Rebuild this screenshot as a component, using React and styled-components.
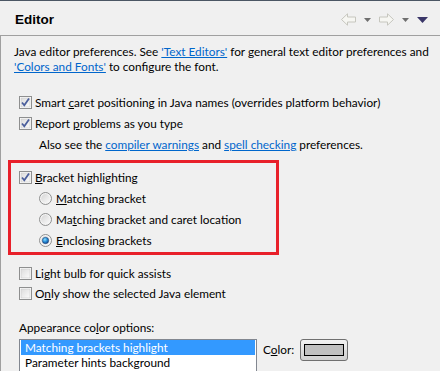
import React from 'react'
import styled, { createGlobalStyle } from 'styled-components'

const GlobalStyle = createGlobalStyle`
  html, body {
    margin: 0;
    padding: 0;
    background: #f0f0f0;
  }
  body {
    font-family: Lato, 'Open Sans', sans-serif;
    font-size: 11.8px;
    color: #000;
  }
`

const Page = styled.div`
  width: 440px;
  height: 371px;
  overflow: hidden;
  border-top: 1px solid #4b5664;
  box-sizing: border-box;
  background: #f0f0f0;
`

const Header = styled.div`
  height: 34px;
  display: flex;
  align-items: center;
  justify-content: space-between;
  padding: 0 12px 0 15px;
  border-bottom: 1px solid #a0a0a0;
`

const Title = styled.h1`
  margin: 0;
  font-family: 'Liberation Sans', Arial, sans-serif;
  font-size: 13.5px;
  font-weight: bold;
  padding-top: 2px;
`

const Nav = styled.div`
  display: flex;
  align-items: center;
  gap: 8px;
  padding-top: 3px;
`

const Body = styled.div`
  border-left: 1px solid #a0a0a0;
  padding: 8px 0 0 13px;
  height: 100%;
`

const Intro = styled.p`
  margin: 0 0 18px;
  line-height: 15px;
`

const Link = styled.a`
  color: #0066cc;
  text-decoration: underline;
  cursor: pointer;
`

const Key = styled.span`
  text-decoration: underline;
`

const Row = styled.label`
  display: flex;
  align-items: center;
  height: ${p => p.h || 21}px;
  padding-left: ${p => p.indent ?? 5}px;
  gap: ${p => p.gap || 3}px;
`

const Note = styled.div`
  height: 21px;
  display: flex;
  align-items: center;
  padding-left: 25px;
`

const Highlight = styled.div`
  margin: 5px 0 0 -6px;
  width: 257px;
  border: 3px solid #e8202a;
  padding: 4px 0 1px 8px;
  box-sizing: content-box;
`

const Group = styled.div`
  margin-top: 8px;
`

const Caption = styled.div`
  margin: 17px 0 0 5px;
  line-height: 15px;
`

const ColorRow = styled.div`
  display: flex;
  align-items: flex-start;
  margin: 4px 0 0 5px;
`

const List = styled.ul`
  list-style: none;
  margin: 0;
  padding: 0 1px 1px;
  width: 234px;
  height: 40px;
  background: #fff;
  border: 1px solid #828790;
`

const Item = styled.li`
  height: 15px;
  line-height: 15px;
  padding-left: 4px;
  background: ${p => (p.selected ? '#3399ff' : 'transparent')};
  color: ${p => (p.selected ? '#fff' : '#000')};
`

const ColorLabel = styled.span`
  margin: 3px 0 0 6px;
  line-height: 15px;
`

const ColorButton = styled.button`
  margin-left: 6px;
  width: 48px;
  height: 22px;
  border: 1px solid #707070;
  border-radius: 3px;
  background: linear-gradient(#f2f2f2, #e5e5e5 50%, #dddddd 51%, #cfcfcf);
  display: flex;
  align-items: center;
  justify-content: center;
  padding: 0;
`

const Swatch = styled.span`
  width: 38px;
  height: 10px;
  background: #c0c0c0;
  border: 1px solid #000;
`

const Check = ({ checked }) => (
  <svg width="13" height="13" viewBox="0 0 13 13">
    <defs>
      <linearGradient id="cbg" x1="0" y1="0" x2="1" y2="1">
        <stop offset="0" stopColor="#dcdcdc" />
        <stop offset="1" stopColor="#fbfbfb" />
      </linearGradient>
    </defs>
    <rect x="0.5" y="0.5" width="12" height="12" fill="#fff" stroke="#8e8f8f" />
    <rect x="2" y="2" width="9" height="9" fill="url(#cbg)" stroke="#c8c8c8" strokeWidth="0.6" />
    {checked && (
      <path d="M3 6.5 L5.3 9.3 L10 2.6" fill="none" stroke="#4b5f9c" strokeWidth="1.8" />
    )}
  </svg>
)

const Radio = ({ checked }) => (
  <svg width="13" height="13" viewBox="0 0 13 13">
    <defs>
      <linearGradient id="rbg" x1="0" y1="0" x2="1" y2="1">
        <stop offset="0" stopColor="#d6d6d6" />
        <stop offset="1" stopColor="#fafafa" />
      </linearGradient>
      <radialGradient id="rdot" cx="0.4" cy="0.35" r="0.7">
        <stop offset="0" stopColor="#8ee0ff" />
        <stop offset="0.5" stopColor="#2a8fd8" />
        <stop offset="1" stopColor="#0f3f86" />
      </radialGradient>
    </defs>
    <circle cx="6.5" cy="6.5" r="6" fill="#f4f4f4" stroke="#8e8f8f" />
    <circle cx="6.5" cy="6.5" r="4.4" fill="url(#rbg)" />
    {checked && <circle cx="6.5" cy="6.5" r="3.2" fill="url(#rdot)" stroke="#1c3f70" strokeWidth="0.5" />}
  </svg>
)

const ArrowLeft = () => (
  <svg width="15" height="13" viewBox="0 0 15 13">
    <path d="M0.5 6.5 L6.5 0.8 V4 H14.5 V9 H6.5 V12.2 Z" fill="#f6f6f2" stroke="#c6c6be" />
  </svg>
)

const ArrowRight = () => (
  <svg width="15" height="13" viewBox="0 0 15 13">
    <path d="M14.5 6.5 L8.5 0.8 V4 H0.5 V9 H8.5 V12.2 Z" fill="#f6f6f2" stroke="#c6c6be" />
  </svg>
)

const Drop = ({ dark }) => (
  <svg width={dark ? 11 : 7} height={dark ? 6 : 4} viewBox={dark ? '0 0 11 6' : '0 0 7 4'}>
    {dark ? <path d="M0 0 H11 L5.5 6 Z" fill="#3a3668" /> : <path d="M0 0 H7 L3.5 4 Z" fill="#6f6f6f" />}
  </svg>
)

export default function App () {
  return (
    <Page>
      <GlobalStyle />
      <Header>
        <Title>Editor</Title>
        <Nav>
          <ArrowLeft />
          <Drop />
          <ArrowRight />
          <Drop />
          <Drop dark />
        </Nav>
      </Header>
      <Body>
        <Intro>
          Java editor preferences. See <Link>'Text Editors'</Link> for general text editor preferences and{' '}
          <Link>'Colors and Fonts'</Link> to configure the font.
        </Intro>
        <Row><Check checked /> <span>Smart <Key>c</Key>aret positioning in Java names (overrides platform behavior)</span></Row>
        <Row><Check checked /> <span>Report <Key>p</Key>roblems as you type</span></Row>
        <Note>
          <span>Also see the <Link>compiler warnings</Link> and <Link>spell checking</Link> preferences.</span>
        </Note>
        <Highlight>
          <Row indent={0}><Check checked /> <span><Key>B</Key>racket highlighting</span></Row>
          <Row indent={20} gap={4}><Radio /> <span><Key>M</Key>atching bracket</span></Row>
          <Row indent={20} gap={4}><Radio /> <span>Ma<Key>t</Key>ching bracket and caret location</span></Row>
          <Row indent={20} gap={4}><Radio checked /> <span><Key>E</Key>nclosing brackets</span></Row>
        </Highlight>
        <Group>
          <Row><Check /> <span>Li<Key>g</Key>ht bulb for quick assists</span></Row>
          <Row h={19}><Check /> <span>O<Key>n</Key>ly show the selected Java element</span></Row>
        </Group>
        <Caption>Appearance co<Key>l</Key>or options:</Caption>
        <ColorRow>
          <List>
            <Item selected>Matching brackets highlight</Item>
            <Item>Parameter hints background</Item>
          </List>
          <ColorLabel>C<Key>o</Key>lor:</ColorLabel>
          <ColorButton><Swatch /></ColorButton>
        </ColorRow>
      </Body>
    </Page>
  )
}
